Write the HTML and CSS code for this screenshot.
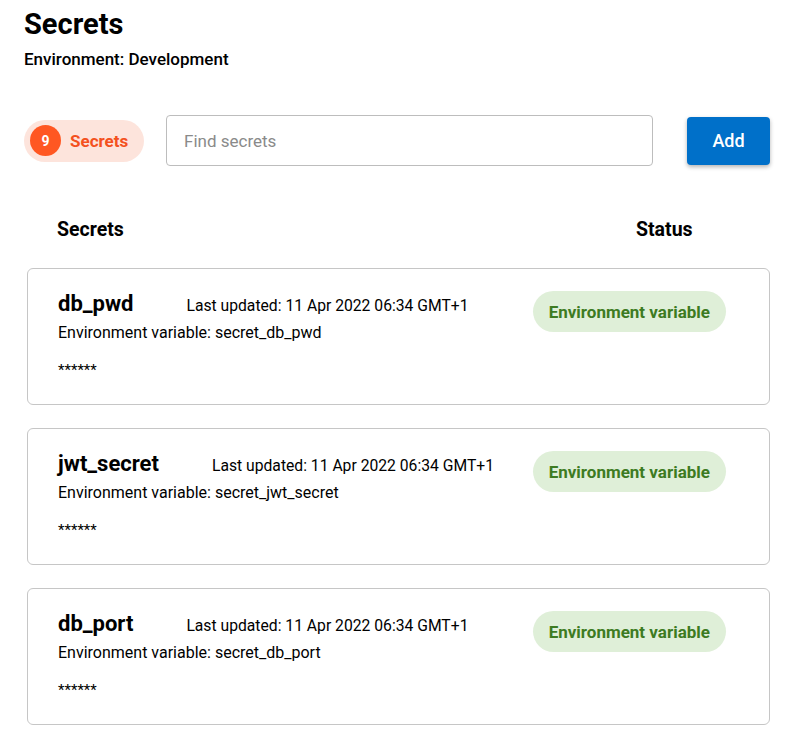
FILE: index.html
```html
<!DOCTYPE html>
<html lang="en">
<head>
<meta charset="utf-8">
<title>Secrets</title>
<link rel="stylesheet" href="styles.css">
</head>
<body>
<div class="page">
  <h1 class="title">Secrets</h1>
  <div class="subtitle">Environment: Development</div>

  <div class="toolbar">
    <div class="count-pill">
      <span class="count-circle">9</span>
      <span class="count-label">Secrets</span>
    </div>
    <input class="search" type="text" placeholder="Find secrets">
    <button class="add-btn">Add</button>
  </div>

  <div class="list">
    <div class="list-header">
      <span>Secrets</span>
      <span>Status</span>
    </div>

    <div class="card">
      <div class="card-main">
        <div class="card-top">
          <span class="name">db_pwd</span>
          <span class="updated">Last updated: 11 Apr 2022 06:34 GMT+1</span>
        </div>
        <div class="envvar">Environment variable: secret_db_pwd</div>
        <div class="stars">******</div>
      </div>
      <span class="status">Environment variable</span>
    </div>

    <div class="card">
      <div class="card-main">
        <div class="card-top">
          <span class="name">jwt_secret</span>
          <span class="updated">Last updated: 11 Apr 2022 06:34 GMT+1</span>
        </div>
        <div class="envvar">Environment variable: secret_jwt_secret</div>
        <div class="stars">******</div>
      </div>
      <span class="status">Environment variable</span>
    </div>

    <div class="card">
      <div class="card-main">
        <div class="card-top">
          <span class="name">db_port</span>
          <span class="updated">Last updated: 11 Apr 2022 06:34 GMT+1</span>
        </div>
        <div class="envvar">Environment variable: secret_db_port</div>
        <div class="stars">******</div>
      </div>
      <span class="status">Environment variable</span>
    </div>
  </div>
</div>
</body>
</html>
```

FILE: styles.css
```css
* { box-sizing: border-box; }

html, body {
  margin: 0;
  padding: 0;
  background: #ffffff;
}

body {
  font-family: Roboto, "Liberation Sans", Arial, sans-serif;
  color: #000;
}

.page {
  padding: 7px 30px 0 24px;
}

.title {
  margin: 0;
  font-size: 29px;
  font-weight: 700;
  line-height: 34px;
}

.subtitle {
  margin-top: 8px;
  font-size: 17px;
  font-weight: 500;
  line-height: 20px;
}

.toolbar {
  display: flex;
  align-items: center;
  margin-top: 46px;
  height: 51px;
}

.count-pill {
  display: flex;
  align-items: center;
  height: 42px;
  width: 120px;
  padding: 0 0 0 6px;
  border-radius: 21px;
  background: #fde4dc;
}

.count-circle {
  width: 31px;
  height: 31px;
  border-radius: 50%;
  background: #ff5722;
  color: #fff;
  font-size: 14px;
  font-weight: 700;
  display: flex;
  align-items: center;
  justify-content: center;
}

.count-label {
  margin-left: 9px;
  color: #f4511e;
  font-size: 17px;
  font-weight: 700;
}

.search {
  margin-left: 22px;
  width: 487px;
  height: 51px;
  border: 1px solid #bdbdbd;
  border-radius: 4px;
  padding: 0 17px;
  font-family: inherit;
  font-size: 17px;
  color: #333;
  outline: none;
}

.search::placeholder {
  color: #8a8a8a;
}

.add-btn {
  margin-left: 34px;
  width: 83px;
  height: 48px;
  border: none;
  border-radius: 4px;
  background: #0070c9;
  color: #fff;
  font-family: inherit;
  font-size: 18px;
  font-weight: 500;
  box-shadow: 0 2px 4px rgba(0, 0, 0, 0.3);
}

.list {
  margin-left: 3px;
}

.list-header {
  display: grid;
  grid-template-columns: 1fr 134px;
  padding-left: 30px;
  margin-top: 53px;
  font-size: 19.5px;
  font-weight: 700;
  line-height: 22px;
}

.card {
  display: flex;
  justify-content: space-between;
  align-items: flex-start;
  height: 137px;
  margin-top: 27px;
  padding: 21px 43px 0 30px;
  border: 1px solid #c6c6c6;
  border-radius: 6px;
}

.card + .card {
  margin-top: 23px;
}

.card-top {
  display: flex;
  align-items: baseline;
  line-height: 28px;
}

.name {
  font-size: 22px;
  font-weight: 700;
  margin-right: 53px;
}

.updated {
  font-size: 15.7px;
}

.envvar {
  margin-top: 3px;
  font-size: 16px;
  line-height: 20px;
}

.stars {
  margin-top: 17px;
  font-size: 15px;
  line-height: 20px;
}

.status {
  margin-top: 1px;
  height: 41px;
  padding: 0 16px;
  border-radius: 21px;
  background: #dfefd8;
  color: #3d7b22;
  font-size: 17px;
  font-weight: 700;
  display: flex;
  align-items: center;
}
```
